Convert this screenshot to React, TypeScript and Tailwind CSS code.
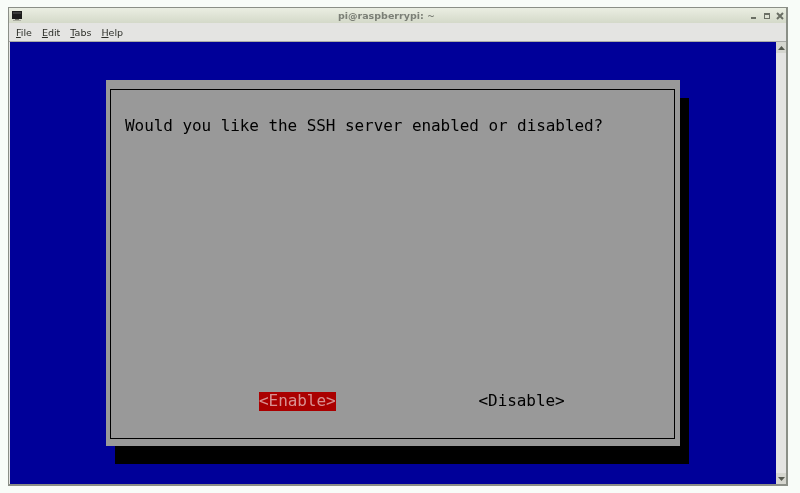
import React from "react";

const ui = { fontFamily: '"DejaVu Sans", sans-serif' };
const mono = { fontFamily: '"DejaVu Sans Mono", monospace' };

function MenuItem({ first, rest }: { first: string; rest: string }) {
  return (
    <span>
      <span className="underline underline-offset-1">{first}</span>
      {rest}
    </span>
  );
}

function TitleButtons() {
  return (
    <div className="flex items-center gap-[5px] text-[#6a6e64]">
      <svg width="8" height="8" viewBox="0 0 8 8"><rect x="1" y="5" width="5" height="2" fill="currentColor" /></svg>
      <svg width="8" height="8" viewBox="0 0 8 8"><rect x="1.5" y="1.5" width="5" height="5" fill="none" stroke="currentColor" strokeWidth="1" /><rect x="1" y="1" width="6" height="2" fill="currentColor" /></svg>
      <svg width="8" height="8" viewBox="0 0 8 8"><path d="M1 1L7 7M7 1L1 7" stroke="currentColor" strokeWidth="2" /></svg>
    </div>
  );
}

export default function App() {
  return (
    <div className="w-[800px] h-[493px] bg-[#f8fcf8] pt-[7px] pl-[8px] overflow-hidden">
      <div className="w-[780px] h-[479px] flex flex-col border border-[#8b8f87] border-b-2 border-r-2 bg-[#e4e4e2] blur-[0.35px]">
        {/* title bar */}
        <div className="h-[15px] shrink-0 flex items-center justify-between pl-[3px] pr-[2px] bg-gradient-to-b from-[#eaeee2] to-[#d4d9c9]">
          <svg width="11" height="11" viewBox="0 0 11 11" className="mt-[1px]">
            <rect x="0" y="0" width="10" height="8" fill="#1c1c1c" />
            <rect x="1" y="1" width="8" height="2" fill="#3a3a3a" />
            <rect x="3" y="8" width="4" height="1" fill="#77796f" />
            <rect x="1" y="9" width="8" height="1" fill="#a9ab9f" />
          </svg>
          <span className="text-[9.5px] font-bold leading-none text-[#7b7f76]" style={ui}>pi@raspberrypi: ~</span>
          <TitleButtons />
        </div>
        {/* menu */}
        <div className="h-[19px] shrink-0 flex items-center gap-[10px] pl-[7px] pt-[1px] text-[9.5px] leading-none text-[#2c2e28] bg-[#e4e4e2] border-b border-[#a9aaa6]" style={ui}>
          <MenuItem first="F" rest="ile" />
          <MenuItem first="E" rest="dit" />
          <MenuItem first="T" rest="abs" />
          <MenuItem first="H" rest="elp" />
        </div>
        {/* terminal + scrollbar */}
        <div className="flex-1 flex min-h-0">
          <div className="w-[766px] ml-[1px] bg-[#000099] pt-[38px] pl-[96px] overflow-hidden">
            <div className="w-[574px] h-[366px] bg-[#999999] pt-[9px] pl-[4px] shadow-[9px_18px_0_0_#000000]">
              <div className="w-[565px] h-[350px] border border-[#000000] flex flex-col pt-[26px] pl-[14px] text-[16px] leading-[20px] text-[#000000]" style={mono}>
                <p className="tracking-[-0.07px] whitespace-pre">Would you like the SSH server enabled or disabled?</p>
                <div className="mt-auto mb-[27px] flex items-center pl-[134px] whitespace-pre tracking-[-0.07px]">
                  <span className="h-[19px] flex items-center bg-[#aa0000] text-[#d89090]">&lt;Enable&gt;</span>
                  <span className="ml-[143px]">&lt;Disable&gt;</span>
                </div>
              </div>
            </div>
          </div>
          <div className="flex-1 flex flex-col justify-between bg-[#e4e4e2]">
            <div className="h-[11px] flex items-center justify-center bg-[#d5d6cf]">
              <svg width="7" height="4" viewBox="0 0 7 4"><path d="M3.5 0L7 4H0Z" fill="#55594f" /></svg>
            </div>
            <div className="h-[11px] flex items-center justify-center bg-[#d5d6cf]">
              <svg width="7" height="4" viewBox="0 0 7 4"><path d="M0 0H7L3.5 4Z" fill="#55594f" /></svg>
            </div>
          </div>
        </div>
      </div>
    </div>
  );
}
